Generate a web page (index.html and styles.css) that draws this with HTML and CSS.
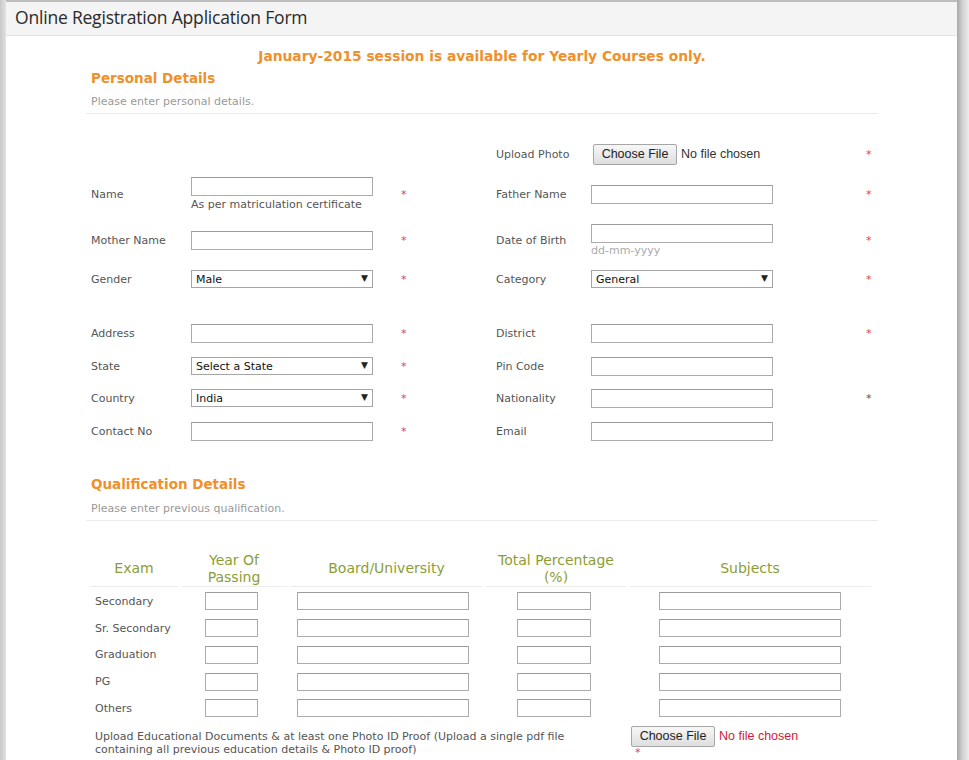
FILE: index.html
```html
<!DOCTYPE html>
<html lang="en">
<head>
<meta charset="utf-8">
<title>Online Registration Application Form</title>
<link rel="stylesheet" href="styles.css">
</head>
<body>
<div class="shell">
  <div class="edge-l"></div>
  <div class="panel">
    <div class="panel-head">Online Registration Application Form</div>
    <div class="content">
      <div class="notice">January-2015 session is available for Yearly Courses only.</div>
      <h2 class="sec-title p">Personal Details</h2>
      <p class="sec-sub">Please enter personal details.</p>

      <div class="form">
        <div class="row h34">
          <span></span><span></span><span></span>
          <label class="lbl">Upload Photo</label>
          <div class="file"><button type="button" class="file-btn">Choose File</button><span class="file-name">No file chosen</span></div>
          <span class="req">*</span>
        </div>
        <div class="row h47">
          <label class="lbl">Name</label>
          <div class="field"><input class="txt" type="text"><div class="help">As per matriculation certificate</div></div>
          <span class="req">*</span>
          <label class="lbl">Father Name</label>
          <div class="field"><input class="txt" type="text"></div>
          <span class="req">*</span>
        </div>
        <div class="row h45">
          <label class="lbl">Mother Name</label>
          <div class="field"><input class="txt" type="text"></div>
          <span class="req">*</span>
          <label class="lbl">Date of Birth</label>
          <div class="field"><input class="txt" type="text"><div class="hint">dd-mm-yyyy</div></div>
          <span class="req">*</span>
        </div>
        <div class="row h32">
          <label class="lbl">Gender</label>
          <div class="sel"><select><option>Male</option><option>Female</option></select><span class="arrow">▼</span></div>
          <span class="req">*</span>
          <label class="lbl">Category</label>
          <div class="sel"><select><option>General</option></select><span class="arrow">▼</span></div>
          <span class="req">*</span>
        </div>
        <div class="row h34 gap">
          <label class="lbl">Address</label>
          <div class="field"><input class="txt" type="text"></div>
          <span class="req">*</span>
          <label class="lbl">District</label>
          <div class="field"><input class="txt" type="text"></div>
          <span class="req">*</span>
        </div>
        <div class="row h32">
          <label class="lbl">State</label>
          <div class="sel"><select><option>Select a State</option></select><span class="arrow">▼</span></div>
          <span class="req">*</span>
          <label class="lbl">Pin Code</label>
          <div class="field"><input class="txt" type="text"></div>
          <span></span>
        </div>
        <div class="row h32">
          <label class="lbl">Country</label>
          <div class="sel"><select><option>India</option></select><span class="arrow">▼</span></div>
          <span class="req">*</span>
          <label class="lbl">Nationality</label>
          <div class="field"><input class="txt" type="text"></div>
          <span class="req dark">*</span>
        </div>
        <div class="row h34">
          <label class="lbl">Contact No</label>
          <div class="field"><input class="txt" type="text"></div>
          <span class="req">*</span>
          <label class="lbl">Email</label>
          <div class="field"><input class="txt" type="text"></div>
          <span></span>
        </div>
      </div>

      <h2 class="sec-title q">Qualification Details</h2>
      <p class="sec-sub qs">Please enter previous qualification.</p>

      <div class="qual">
        <div class="qh">Exam</div>
        <div class="qh">Year Of<br>Passing</div>
        <div class="qh">Board/University</div>
        <div class="qh">Total Percentage<br>(%)</div>
        <div class="qh">Subjects</div>

        <div class="qe">Secondary</div>
        <div class="qc"><input class="txt yr" type="text"></div>
        <div class="qc"><input class="txt bd" type="text"></div>
        <div class="qc"><input class="txt tp" type="text"></div>
        <div class="qc"><input class="txt sb" type="text"></div>

        <div class="qe">Sr. Secondary</div>
        <div class="qc"><input class="txt yr" type="text"></div>
        <div class="qc"><input class="txt bd" type="text"></div>
        <div class="qc"><input class="txt tp" type="text"></div>
        <div class="qc"><input class="txt sb" type="text"></div>

        <div class="qe">Graduation</div>
        <div class="qc"><input class="txt yr" type="text"></div>
        <div class="qc"><input class="txt bd" type="text"></div>
        <div class="qc"><input class="txt tp" type="text"></div>
        <div class="qc"><input class="txt sb" type="text"></div>

        <div class="qe">PG</div>
        <div class="qc"><input class="txt yr" type="text"></div>
        <div class="qc"><input class="txt bd" type="text"></div>
        <div class="qc"><input class="txt tp" type="text"></div>
        <div class="qc"><input class="txt sb" type="text"></div>

        <div class="qe">Others</div>
        <div class="qc"><input class="txt yr" type="text"></div>
        <div class="qc"><input class="txt bd" type="text"></div>
        <div class="qc"><input class="txt tp" type="text"></div>
        <div class="qc"><input class="txt sb" type="text"></div>

        <div class="up-text">Upload Educational Documents &amp; at least one Photo ID Proof (Upload a single pdf file containing all previous education details &amp; Photo ID proof)</div>
        <div class="up-ctl">
          <div class="file"><button type="button" class="file-btn">Choose File</button><span class="file-name red">No file chosen</span></div>
          <div class="req below">*</div>
        </div>
      </div>
    </div>
  </div>
  <div class="edge-r"></div>
</div>
</body>
</html>
```

FILE: styles.css
```css
* { box-sizing: border-box; }
html, body { margin: 0; padding: 0; }
body {
  background: #fff;
  font-family: "DejaVu Sans", Verdana, sans-serif;
  font-size: 11px;
  color: #555;
  overflow: hidden;
}
.shell {
  display: flex;
  min-height: 760px;
}
.edge-l {
  width: 6px;
  flex: none;
  background: linear-gradient(to right, #c8c8c8, #e2e2e2);
}
.edge-r {
  width: 12px;
  flex: none;
  background: linear-gradient(to right, #a9a9a9, #cfcfcf 45%, #ededed);
}
.panel {
  flex: 1;
  border-top: 2px solid #bdbdbd;
  background: #fff;
}
.panel-head {
  height: 34px;
  background: #f4f4f4;
  border-bottom: 1px solid #e2e2e2;
  padding-left: 9px;
  font-family: "Open Sans", "DejaVu Sans", sans-serif;
  font-size: 17.5px;
  line-height: 31px;
  color: #2a2a2a;
  letter-spacing: -0.2px;
}
.content {
  margin-left: 80px;
  width: 792px;
}
.notice {
  margin-top: 10px;
  height: 20px;
  line-height: 20px;
  text-align: center;
  font-weight: bold;
  font-size: 13.8px;
  color: #f0902c;
}
.sec-title {
  margin: 0;
  padding-left: 5px;
  height: 20px;
  line-height: 20px;
  font-size: 13.5px;
  font-weight: bold;
  color: #f0902c;
}
.sec-title.p { margin-top: 2px; }
.sec-title.q { margin-top: 26px; }
.sec-sub {
  margin: 6px 0 0;
  padding: 0 5px 3px;
  line-height: 16px;
  font-size: 11px;
  color: #999;
  border-bottom: 1px solid #ececec;
}
.sec-sub.qs { margin-top: 7px; }
.form {
  margin-top: 23px;
  padding-left: 5px;
}
.row {
  display: grid;
  grid-template-columns: 100px 210px 95px 95px 275px 20px;
  align-items: center;
}
.h32 { height: 32px; }
.h34 { height: 34px; }
.h45 { height: 45px; }
.h47 { height: 47px; }
.gap { margin-top: 21px; }
.lbl { color: #555; }
.field { display: flex; flex-direction: column; }
.txt {
  width: 182px;
  height: 19px;
  margin: 0;
  border: 1px solid #ababab;
  border-top-color: #9c9c9c;
  background: #fff;
  font: 11px "DejaVu Sans", sans-serif;
  padding: 0 3px;
}
.help {
  margin-top: 2px;
  line-height: 14px;
  color: #555;
}
.hint {
  margin-top: 1px;
  line-height: 14px;
  color: #aaa;
}
.req {
  color: #d94452;
  font-size: 11px;
}
.req.dark { color: #555; }
.sel {
  position: relative;
  width: 182px;
  height: 18px;
}
.sel select {
  -webkit-appearance: none;
  appearance: none;
  width: 182px;
  height: 18px;
  margin: 0;
  border: 1px solid #a5a5a5;
  border-radius: 0;
  background: #fff;
  font: 11px "DejaVu Sans", sans-serif;
  color: #111;
  padding: 0 0 0 4px;
}
.sel .arrow {
  position: absolute;
  right: 5px;
  top: 3px;
  font-size: 9px;
  line-height: 11px;
  color: #222;
  pointer-events: none;
}
.file {
  display: flex;
  align-items: center;
}
.file-btn {
  margin: 0 0 0 2px;
  height: 21px;
  width: 84px;
  padding: 0;
  border: 1px solid #a6a6a6;
  border-radius: 2px;
  background: linear-gradient(#f7f7f7, #dedede);
  font: 12.5px "Liberation Sans", Arial, sans-serif;
  color: #222;
}
.file-name {
  margin-left: 4px;
  font: 12.5px "Liberation Sans", Arial, sans-serif;
  color: #333;
}
.file-name.red { color: #d11a3c; }

.qual {
  margin-top: 30px;
  margin-left: 4px;
  display: grid;
  grid-template-columns: 88px 106px 193px 140px 242px;
  grid-template-rows: 37px;
  column-gap: 3px;
  grid-auto-rows: 26.75px;
}
.qh {
  grid-row: 1;
  align-self: start;
  height: 36px;
  border-bottom: 1px solid #ececec;
  display: flex;
  align-items: center;
  justify-content: center;
  text-align: center;
  font-size: 14px;
  line-height: 17px;
  color: #8b9e34;
}
.qe {
  display: flex;
  align-items: center;
  padding-left: 5px;
  color: #555;
}
.qc {
  display: flex;
  align-items: center;
  justify-content: center;
}
.qc .txt { height: 18px; }
.yr { width: 53px; margin-left: -5px; }
.bd { width: 172px; margin-left: -7px; }
.tp { width: 74px; margin-left: -4px; }
.sb { width: 182px; margin-left: 0; }
.up-text {
  grid-column: 1 / span 4;
  padding: 8px 40px 0 5px;
  line-height: 13px;
  color: #555;
}
.up-ctl {
  padding-top: 4px;
}
.up-ctl .file-btn { margin-left: 2px; }
.req.below {
  margin-left: 6px;
  line-height: 12px;
}
```
